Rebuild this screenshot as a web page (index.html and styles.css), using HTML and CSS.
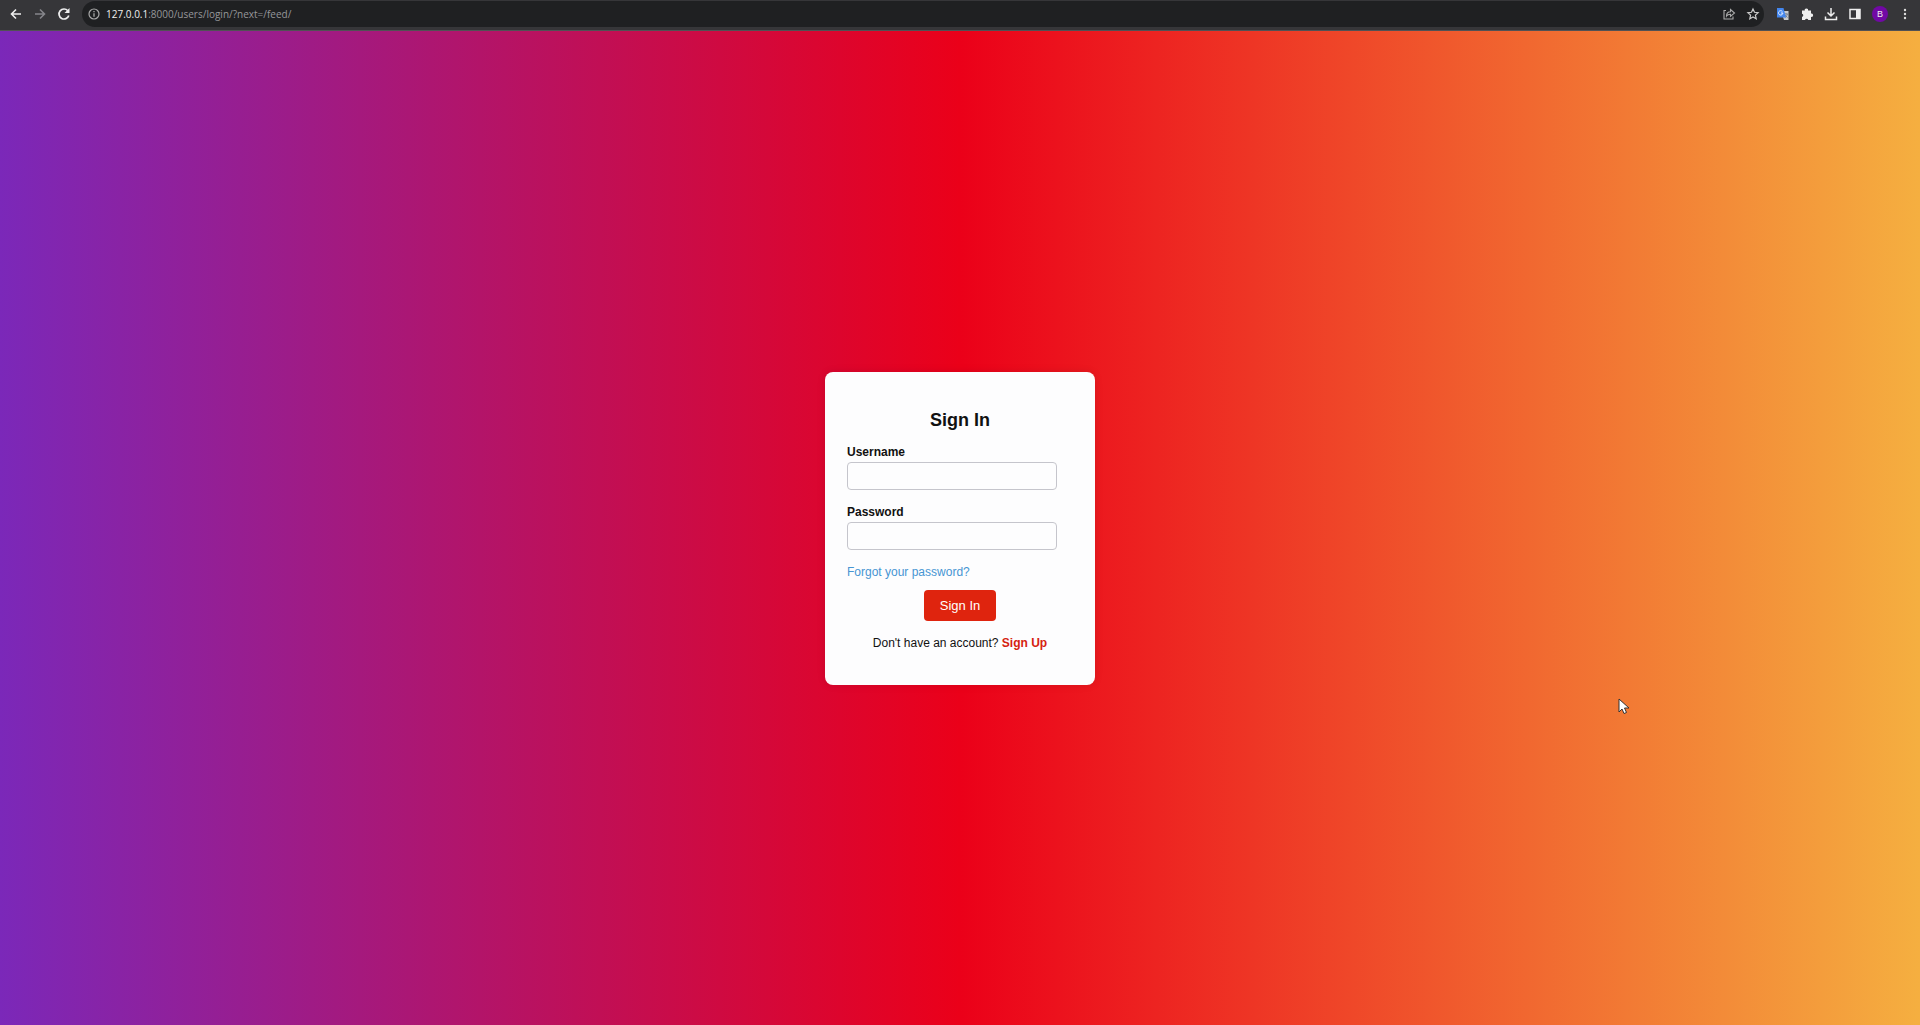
FILE: index.html
```html
<!DOCTYPE html>
<html lang="en">
<head>
<meta charset="utf-8">
<title>Sign In</title>
<link rel="stylesheet" href="styles.css">
</head>
<body>
<header class="toolbar">
  <nav class="nav">
    <button class="icon-button" aria-label="Back"><svg width="16" height="16" viewBox="0 0 16 16"><path d="M13 8H4M8 3.500L3.500 8L8 12.500" fill="none" stroke="#eee" stroke-width="1.600"/></svg></button>
    <button class="icon-button" aria-label="Forward"><svg width="16" height="16" viewBox="0 0 16 16"><path d="M3 8h9M8 3.500L12.500 8L8 12.500" fill="none" stroke="#85858a" stroke-width="1.600"/></svg></button>
    <button class="icon-button" aria-label="Reload"><svg width="16" height="16" viewBox="0 0 16 16"><path d="M12.800 9.500A5 5 0 1 1 11.800 4.700" fill="none" stroke="#eee" stroke-width="1.700"/><path d="M13.500 2v5h-5z" fill="#eee"/></svg></button>
  </nav>
  <div class="address">
    <svg width="14" height="14" viewBox="0 0 14 14"><circle cx="7" cy="7" r="5" fill="none" stroke="#aaa" stroke-width="1.200"/><path d="M7 6.300v3.500M7 4v1.300" stroke="#aaa" stroke-width="1.300"/></svg>
    <p class="url"><span class="host">127.0.0.1</span>:8000/users/login/?next=/feed/</p>
    <button class="icon-button" aria-label="Share"><svg width="14" height="14" viewBox="0 0 14 14"><path d="M4 3.500H2v8.500h9V9.500M4.500 9C4.500 6 6.500 4.800 8.500 4.800V2.500L12.500 6L8.500 9.300V7.200C6.500 7.200 5.300 7.700 4.500 9z" fill="none" stroke="#aaa" stroke-width="1.100"/></svg></button>
    <button class="icon-button" aria-label="Bookmark"><svg width="14" height="14" viewBox="0 0 14 14"><path d="M7 2l1.500 3.300 3.600.4-2.700 2.400.8 3.600L7 9.900l-3.200 1.800.8-3.600L1.900 5.700l3.600-.4z" fill="none" stroke="#ccc" stroke-width="1.200"/></svg></button>
  </div>
  <div class="tools">
    <button class="icon-button" aria-label="Translate"><svg width="14" height="14" viewBox="0 0 14 14"><path d="M5 4h7.500v9H8z" fill="#c8cacd"/><path d="M8 7h4M10 6v1M11.300 7c-.3 2-1.300 3-2.500 3.700M9 8l2.500 2.700" stroke="#68768a" fill="none" stroke-width=".8"/><path d="M1 1h6.500L10 10.500H1z" fill="#4386ee"/><path d="M6.400 4.500A2.200 2.200 0 1 0 6.900 6H5" fill="none" stroke="#e4eeff"/></svg></button>
    <button class="icon-button" aria-label="Extensions"><svg width="14" height="14" viewBox="0 0 14 14"><path d="M2 3.500h2.800a1.700 1.700 0 1 1 3.300 0H11v3a1.700 1.700 0 1 1 0 3.300V13H8.300a1.700 1.700 0 0 0-3.300 0H2v-3a1.700 1.700 0 0 0 0-3.300z" fill="#eee"/></svg></button>
    <button class="icon-button" aria-label="Downloads"><svg width="14" height="14" viewBox="0 0 14 14"><path d="M7 1v8M3.500 5.500L7 9l3.500-3.500M1.500 9.500v3h11v-3" fill="none" stroke="#eee" stroke-width="1.500"/></svg></button>
    <button class="icon-button" aria-label="Side panel"><svg width="14" height="14" viewBox="0 0 14 14"><path d="M2 2.500h10v9H2z" fill="none" stroke="#eee" stroke-width="1.500"/><path d="M8 2h4v10H8z" fill="#eee"/></svg></button>
    <button class="avatar">B</button>
    <button class="icon-button" aria-label="Menu"><svg width="14" height="14" viewBox="0 0 14 14" fill="#ddd"><circle cx="7" cy="3" r="1.200"/><circle cx="7" cy="7" r="1.200"/><circle cx="7" cy="11" r="1.200"/></svg></button>
  </div>
</header>
<main class="page">
  <form class="card">
    <h1 class="title">Sign In</h1>
    <div class="field">
      <label for="username">Username</label>
      <input id="username" type="text">
    </div>
    <div class="field">
      <label for="password">Password</label>
      <input id="password" type="password">
    </div>
    <a class="forgot" href="#">Forgot your password?</a>
    <button class="submit" type="button">Sign In</button>
    <p class="signup">Don't have an account? <a href="#">Sign Up</a></p>
  </form>
</main>
<svg class="cursor" width="12" height="18" viewBox="0 0 12 18"><path d="M1 1v13l3-3 2 4.500 2.500-1L6.500 10H11z" fill="#fff" stroke="#333" stroke-width="1"/></svg>
</body>
</html>
```
FILE: styles.css
```css
* {
  box-sizing: border-box;
}

body {
  margin: 0;
  min-height: 100vh;
  display: flex;
  flex-direction: column;
  font-family: "Liberation Sans", Arial, sans-serif;
  font-size: 12px;
  line-height: 16px;
  color: #111;
}

button {
  border: 0;
  padding: 0;
  background: none;
  font-family: inherit;
}

.toolbar {
  display: flex;
  align-items: center;
  height: 31px;
  padding: 0 8px 2px;
  background: #363639;
  border-bottom: 1px solid #515154;
}

.nav {
  display: flex;
  gap: 8px;
  padding-right: 10px;
}

.icon-button,
.avatar {
  display: flex;
  align-items: center;
  justify-content: center;
  flex: none;
}

.address {
  flex: 1;
  display: flex;
  align-items: center;
  gap: 10px;
  height: 26px;
  padding: 0 4px 0 5px;
  border-radius: 13px;
  background: #1f2022;
}

.url {
  flex: 1;
  margin: 0 0 0 -5px;
  font-family: "Open Sans", sans-serif;
  font-size: 10px;
  color: #96979a;
}

.host {
  color: #f0f0f0;
}

.nav .icon-button {
  width: 16px;
}

.tools {
  display: flex;
  align-items: center;
  gap: 10px;
  padding-left: 12px;
}

.avatar {
  width: 16px;
  height: 16px;
  border-radius: 50%;
  background: #7109a5;
  color: #eee;
  font-size: 9px;
}

.page {
  flex: 1;
  display: flex;
  align-items: center;
  justify-content: center;
  background: linear-gradient(to right, #7b28b9, #eb0019 50%, #f5af40);
}

.card {
  display: flex;
  flex-direction: column;
  width: 270px;
  padding: 36px 22px 34px;
  border-radius: 8px;
  background: #fdfdfe;
  box-shadow: 0 0 8px rgba(0, 0, 0, 0.1);
}

.title {
  margin: 0 0 12px;
  font-size: 18px;
  line-height: 24px;
  text-align: center;
}

.field {
  display: flex;
  flex-direction: column;
  gap: 2px;
  margin-bottom: 14px;
  font-weight: bold;
}

.field input {
  width: 210px;
  height: 28px;
  padding: 4px 8px;
  border: 1px solid #c5c5cc;
  border-radius: 4px;
  background: #fdfdfe;
  font: inherit;
}

.forgot {
  align-self: flex-start;
  color: #4795d3;
  text-decoration: none;
}

.submit {
  align-self: center;
  margin: 10px 0 14px;
  padding: 8px 16px;
  border-radius: 4px;
  background: #df240e;
  color: #fff;
  font-size: 13px;
  line-height: 15px;
}

.signup {
  margin: 0;
  text-align: center;
}

.signup a {
  color: #d5220f;
  font-weight: bold;
  text-decoration: none;
}

.cursor {
  position: absolute;
  left: 1618px;
  top: 698px;
}
```
